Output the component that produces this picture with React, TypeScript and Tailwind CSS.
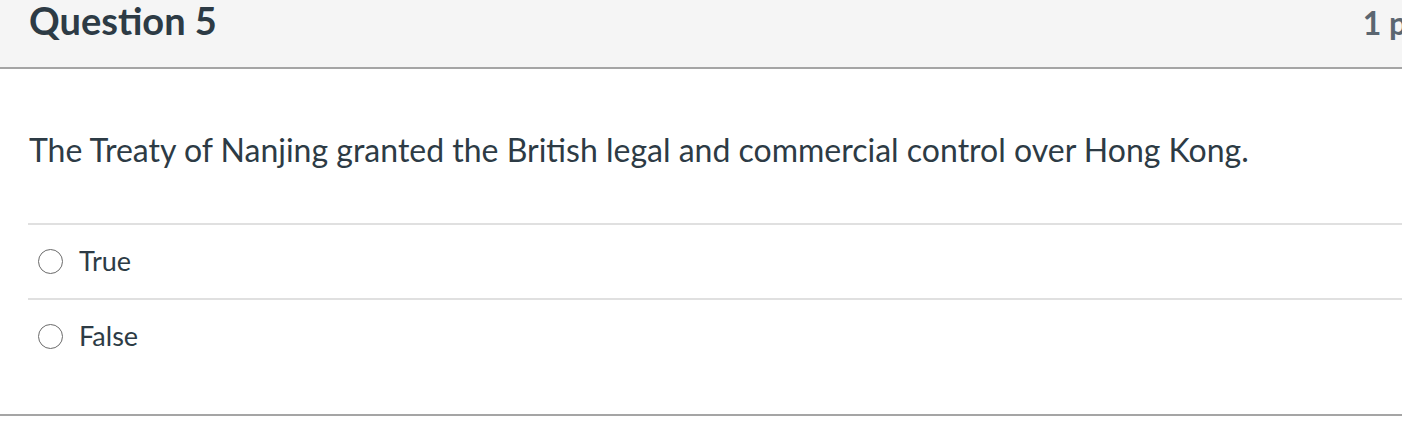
const answers = ["True", "False"];

export default function App() {
  return (
    <div
      className="w-[1402px] h-[436px] overflow-hidden bg-white text-[#2d3b45]"
      style={{ fontFamily: "Lato, 'Liberation Sans', sans-serif" }}
    >
      <div className="border-b-2 border-[#a5a5a5]">
        {/* Header */}
        <div className="h-[69px] bg-[#f5f5f5] border-b-2 border-[#a5a5a5] flex items-baseline pl-[29px] whitespace-nowrap">
          <h2 className="text-[38px] font-bold leading-[40px]">Question 5</h2>
          <div className="ml-auto mr-[-31px] text-[32px] font-bold text-[#5b6670] leading-[40px]">1 pts</div>
        </div>

        {/* Body */}
        <div className="pl-[28px] pt-[61px] pb-[41px]">
          <p className="text-[32px] leading-[40px] pl-[1px] mb-[53px]">
            The Treaty of Nanjing granted the British legal and commercial control over Hong Kong.
          </p>
          <div>
            {answers.map((a) => (
              <div key={a} className="h-[75px] flex items-center border-t-2 border-[#e0e0e0]">
                <div className="w-[25px] h-[25px] rounded-full border-[1.5px] border-[#6b6b6b] ml-[10px]" />
                <span className="ml-[16px] text-[27px] leading-none -mt-[3px]">{a}</span>
              </div>
            ))}
          </div>
        </div>
      </div>
    </div>
  );
}
